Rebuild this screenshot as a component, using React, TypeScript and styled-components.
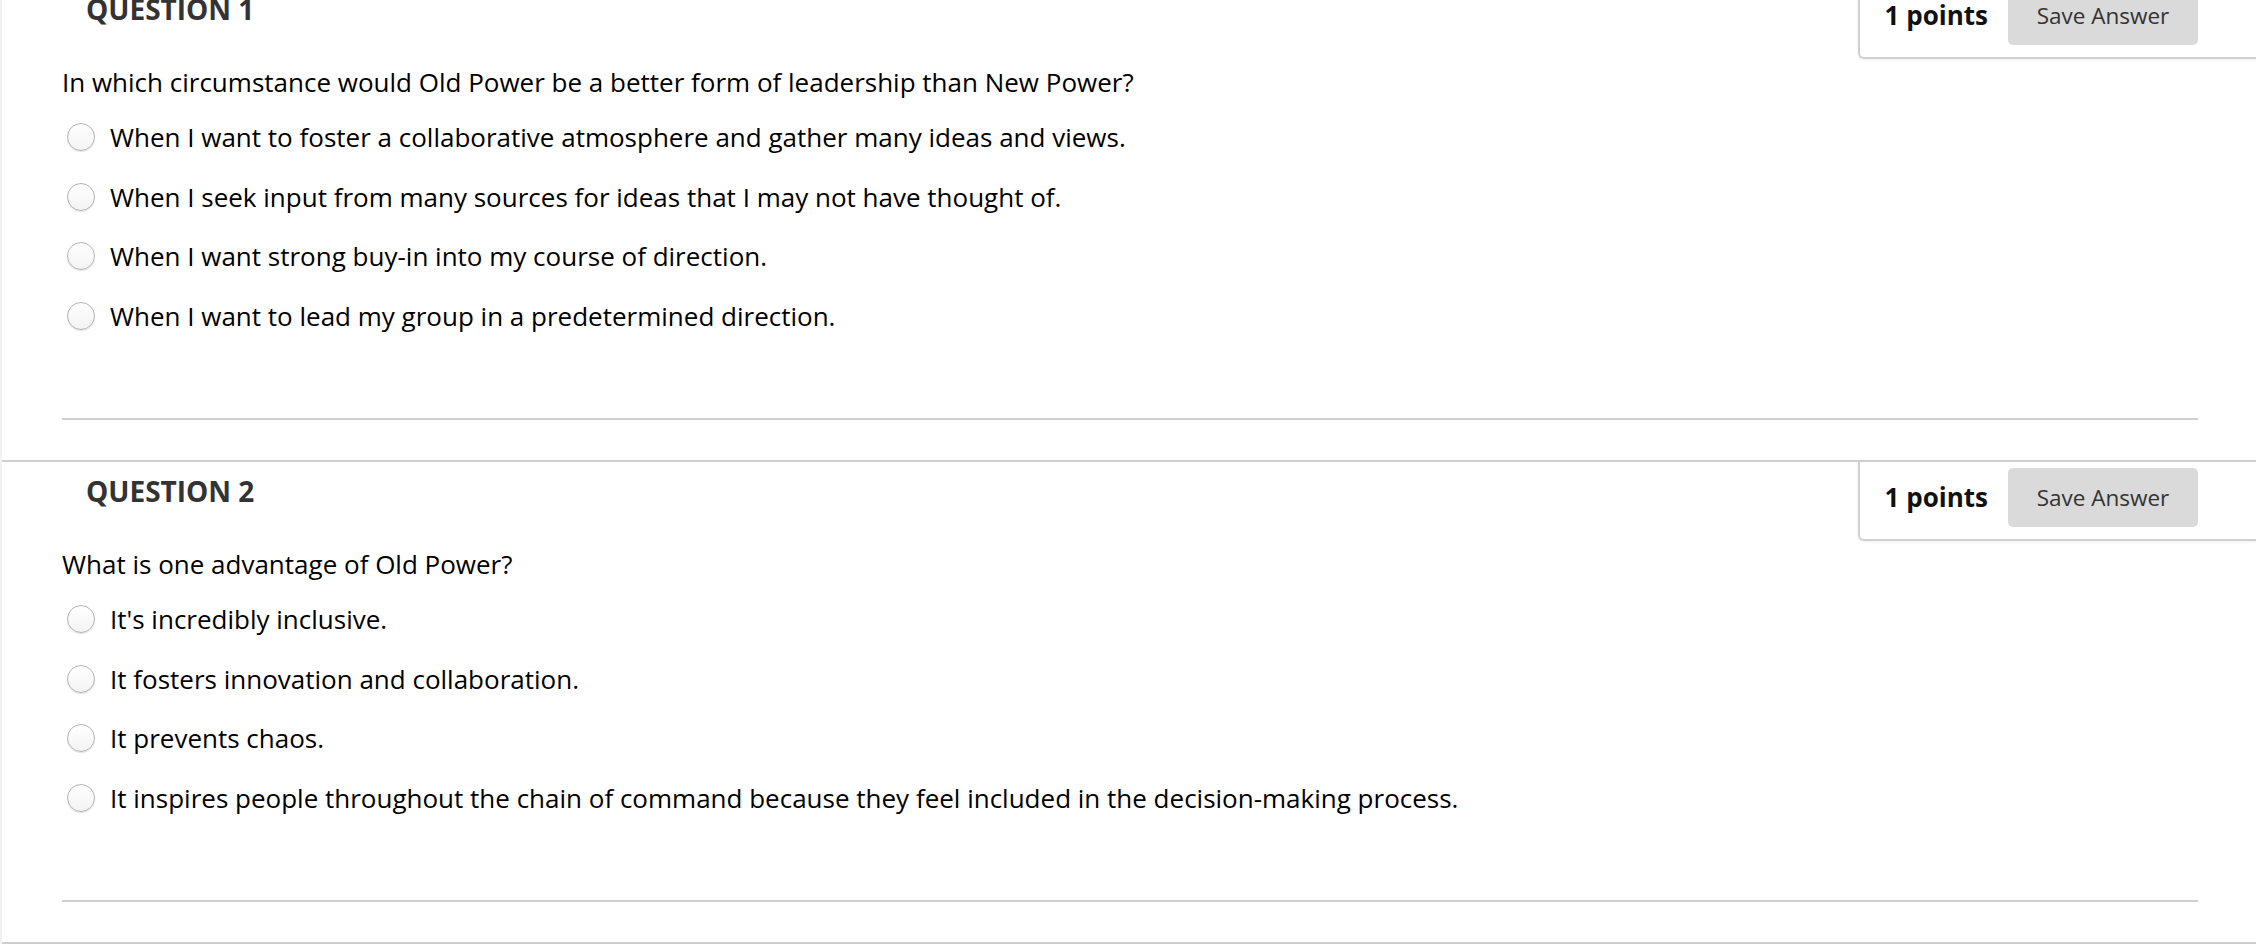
import styled, { createGlobalStyle } from "styled-components"

const GlobalStyle = createGlobalStyle`
html, body {
  margin: 0;
  padding: 0;
  background: #ffffff;
  overflow: hidden;
}
body {
  font-family: "Open Sans", "Noto Sans", sans-serif;
  color: #000;
}
`

const questions = [
  {
    number: 1,
    points: 1,
    prompt: "In which circumstance would Old Power be a better form of leadership than New Power?",
    options: [
      "When I want to foster a collaborative atmosphere and gather many ideas and views.",
      "When I seek input from many sources for ideas that I may not have thought of.",
      "When I want strong buy-in into my course of direction.",
      "When I want to lead my group in a predetermined direction.",
    ],
  },
  {
    number: 2,
    points: 1,
    prompt: "What is one advantage of Old Power?",
    options: [
      "It's incredibly inclusive.",
      "It fosters innovation and collaboration.",
      "It prevents chaos.",
      "It inspires people throughout the chain of command because they feel included in the decision-making process.",
    ],
  },
]

const App = () => {
  return (
    <>
      <GlobalStyle />
      <Page>
        {questions.map((q) => (
          <Section key={q.number}>
            <Header>
              <Title>QUESTION {q.number}</Title>
              <PointsBox>
                <Points>{q.points} points</Points>
                <SaveButton type="button">Save Answer</SaveButton>
              </PointsBox>
            </Header>
            <Prompt>{q.prompt}</Prompt>
            <Options>
              {q.options.map((opt, i) => (
                <Option key={i}>
                  <Radio type="radio" name={`q${q.number}`} />
                  <span>{opt}</span>
                </Option>
              ))}
            </Options>
            <Divider />
          </Section>
        ))}
      </Page>
    </>
  )
}

export default App

// scrolled a little, so the first heading sits partly above the window
const Page = styled.div`
margin-top: -20px;
border-left: 2px solid #f1f1f1;
background: #fff;
min-height: 990px;
`

const Section = styled.div`
height: 480px;
border-bottom: 2px solid #cfcfcf;
display: flex;
flex-direction: column;
`

const Header = styled.div`
display: flex;
flex-direction: row;
justify-content: space-between;
align-items: flex-start;
height: 79px;
`

const Title = styled.h3`
margin: 0;
padding: 10px 0 0 84px;
font-size: 28px;
line-height: 38px;
font-weight: 700;
color: #333;
`

const PointsBox = styled.div`
box-sizing: border-box;
height: 79px;
display: flex;
flex-direction: row;
align-items: center;
gap: 20px;
padding: 0 58px 7px 25px;
border-left: 2px solid #d0d0d0;
border-bottom: 2px solid #d0d0d0;
border-bottom-left-radius: 6px;
box-shadow: 0 1px 3px rgba(0, 0, 0, 0.06);
`

const Points = styled.span`
font-size: 26px;
font-weight: 700;
color: #111;
`

const SaveButton = styled.button`
width: 190px;
height: 59px;
border: none;
border-radius: 5px;
background: #dadada;
color: #333;
font-family: "Open Sans", sans-serif;
font-size: 22.5px;
padding: 0;
`

const Prompt = styled.p`
margin: 5px 0 0 60px;
font-size: 26px;
line-height: 36px;
`

const Options = styled.div`
display: flex;
flex-direction: column;
margin: 7px 0 0 65px;
`

const Option = styled.label`
display: flex;
flex-direction: row;
align-items: center;
gap: 15px;
height: 59.7px;
font-size: 26px;
`

const Radio = styled.input`
appearance: none;
margin: 0;
width: 28px;
height: 28px;
border-radius: 50%;
border: 1px solid #b4b4b4;
background: linear-gradient(#ffffff, #f3f3f3);
box-shadow: 0 1px 1px rgba(0, 0, 0, 0.12);
flex-shrink: 0;
`

const Divider = styled.hr`
margin: auto 58px 40px 60px;
border: none;
height: 2px;
background: #cfcfcf;
`
